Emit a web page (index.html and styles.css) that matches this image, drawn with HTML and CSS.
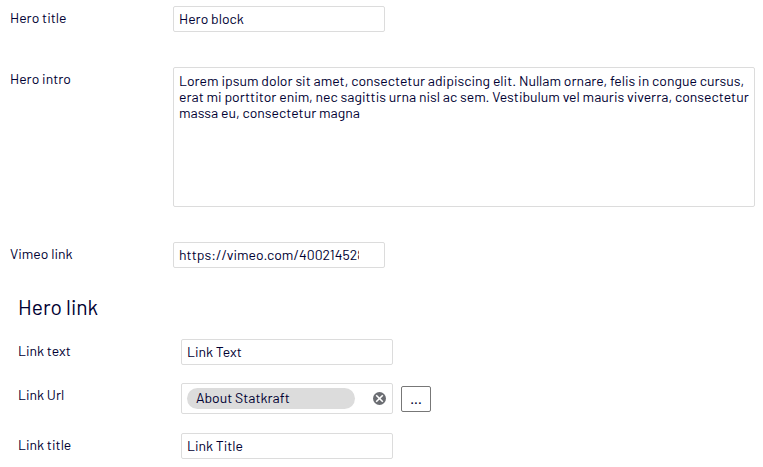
FILE: index.html
```
<!DOCTYPE html>
<html lang="en">
<head>
  <meta charset="UTF-8">
  <title>Hero block</title>
  <link rel="stylesheet" href="styles.css">
</head>
<body>

  <form class="properties">
    <div class="row">
      <label class="label" for="heroTitle">Hero title</label>
      <input class="textbox" type="text" id="heroTitle" value="Hero block">
    </div>

    <div class="row row-intro">
      <label class="label" for="heroIntro">Hero intro</label>
      <textarea class="textbox textarea" id="heroIntro" spellcheck="false">Lorem ipsum dolor sit amet, consectetur adipiscing elit. Nullam ornare, felis in congue cursus,
erat mi porttitor enim, nec sagittis urna nisl ac sem. Vestibulum vel mauris viverra, consectetur
massa eu, consectetur magna</textarea>
    </div>

    <div class="row row-vimeo">
      <label class="label" for="vimeoLink">Vimeo link</label>
      <input class="textbox textbox-url" type="text" id="vimeoLink" value="https://vimeo.com/400214528">
    </div>

    <div class="group">
      <h2 class="group-title">Hero link</h2>

      <div class="row">
        <label class="label" for="linkText">Link text</label>
        <input class="textbox" type="text" id="linkText" value="Link Text">
      </div>

      <div class="row row-url">
        <span class="label">Link Url</span>
        <div class="picker">
          <span class="pill">About Statkraft</span>
          <svg class="clear" viewBox="0 0 13 13" width="13" height="13">
            <circle cx="6.5" cy="6.5" r="6.5" fill="#6b6d72"/>
            <path d="M3.2 3.2l6.6 6.6M9.8 3.2l-6.6 6.6" stroke="#fff" stroke-width="1.6"/>
          </svg>
        </div>
        <button class="browse" type="button">...</button>
      </div>

      <div class="row row-last">
        <label class="label" for="linkTitle">Link title</label>
        <input class="textbox" type="text" id="linkTitle" value="Link Title">
      </div>
    </div>
  </form>

</body>
</html>
```

FILE: styles.css
```
* { box-sizing: border-box; }
body {
  margin: 0;
  background: #fff;
  color: #000032;
  font-family: Barlow, Roboto, "Liberation Sans", sans-serif;
  font-size: 14px;
  line-height: 16px;
  overflow: hidden;
}

.properties { padding: 6px 0 0 10px; }
.row { display: flex; align-items: flex-start; }
.row-intro { margin-top: 35px; }
.row-vimeo { margin-top: 35px; }
.label { width: 163px; padding-top: 4px; }

.textbox {
  width: 212px;
  height: 26px;
  padding: 0 5px 1px;
  border: 1px solid #dcdcdc;
  border-radius: 2px;
  background: #fff;
  color: inherit;
  font: inherit;
  outline: none;
}
.textarea {
  width: 582px;
  height: 140px;
  padding: 5px;
  line-height: 16px;
  white-space: pre;
  overflow: hidden;
  resize: none;
}
.textbox-url { padding-right: 25px; }

.group { padding-left: 8px; }
.group-title {
  margin: 24px 0 18px;
  font-size: 21px;
  font-weight: 400;
  line-height: 29px;
}

.row-url { margin-top: 18px; }
.picker {
  display: flex;
  align-items: center;
  justify-content: space-between;
  width: 212px;
  height: 31px;
  padding: 0 6px 0 5px;
  border: 1px solid #dcdcdc;
  border-radius: 2px;
}
.pill {
  width: 168px;
  height: 21px;
  padding-left: 9px;
  border-radius: 11px;
  background: #dcdcdc;
  line-height: 20px;
}
.browse {
  width: 30px;
  height: 26px;
  margin: 3px 0 0 8px;
  padding: 0;
  border: 1px solid #777;
  border-radius: 2px;
  background: #fff;
  color: inherit;
  font: inherit;
  font-weight: 500;
}
.row-last { margin-top: 19px; }
```
